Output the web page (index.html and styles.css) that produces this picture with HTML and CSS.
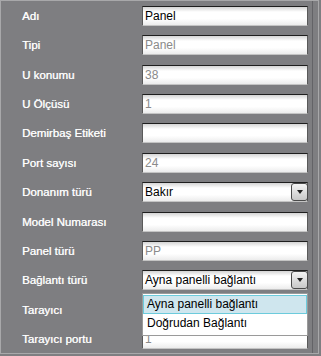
FILE: index.html
```html
<!DOCTYPE html>
<html lang="tr">
  <head>
    <meta charset="UTF-8">
    <title>Panel</title>
    <link rel="stylesheet" href="styles.css">
  </head>
  <body>
    <div class="panel">
      <div class="form">
        <label class="field-label">Adı</label>
        <div class="field">Panel</div>

        <label class="field-label">Tipi</label>
        <div class="field disabled">Panel</div>

        <label class="field-label">U konumu</label>
        <div class="field disabled">38</div>

        <label class="field-label">U Ölçüsü</label>
        <div class="field disabled">1</div>

        <label class="field-label">Demirbaş Etiketi</label>
        <div class="field"></div>

        <label class="field-label">Port sayısı</label>
        <div class="field disabled">24</div>

        <label class="field-label">Donanım türü</label>
        <div class="field select">
          <span class="select-value">Bakır</span>
          <span class="select-btn"><span class="arrow"></span></span>
        </div>

        <label class="field-label">Model Numarası</label>
        <div class="field"></div>

        <label class="field-label">Panel türü</label>
        <div class="field disabled">PP</div>

        <label class="field-label">Bağlantı türü</label>
        <div class="field select open">
          <span class="select-value">Ayna panelli bağlantı</span>
          <span class="select-btn"><span class="arrow"></span></span>
          <ul class="dropdown">
            <li class="active">Ayna panelli bağlantı</li>
            <li>Doğrudan Bağlantı</li>
          </ul>
        </div>

        <label class="field-label">Tarayıcı</label>
        <div class="field"></div>

        <label class="field-label">Tarayıcı portu</label>
        <div class="field disabled">1</div>
      </div>
    </div>
  </body>
</html>
```

FILE: styles.css
```css
:root {
  --panel-bg: #7e7e81;
  --label-color: #ffffff;
  --muted-text: #8a8a8a;
  --frame-light: #a8a8aa;
  --frame-dark: #636367;
}

* {
  margin: 0;
  padding: 0;
  box-sizing: border-box;
}

body {
  background-color: var(--panel-bg);
  font-family: 'Liberation Sans', Arial, sans-serif;
}

.panel {
  width: 319px;
  height: 354px;
  border: 1px solid var(--frame-light);
  padding-right: 5px;
  overflow: hidden;
}

.form {
  height: 100%;
  border-right: 1px solid var(--frame-dark);
  padding: 5px 0 0 21px;
  display: grid;
  grid-template-columns: 120px 166px;
  grid-auto-rows: 20px;
  row-gap: 9.36px;
  align-items: center;
}

.field-label {
  color: var(--label-color);
  font-size: 11.5px;
  line-height: 20px;
  white-space: nowrap;
  text-shadow: 0.4px 0 0 rgba(255, 255, 255, 0.75);
}

.field {
  height: 20px;
  font-size: 12px;
  line-height: 18px;
  padding-left: 2px;
  color: #000;
  border: 1px solid #5a5a5a;
  border-top-color: #1e1e1e;
  border-bottom-color: #c4c4c4;
  background: linear-gradient(to bottom, #d4d4d4 0, #ffffff 5px, #ffffff 65%, #ececec 100%);
}

.field.disabled {
  color: var(--muted-text);
}

.select {
  position: relative;
  display: flex;
  align-items: center;
}

.select-value {
  flex: 1;
}

.select-btn {
  width: 17px;
  height: 18px;
  margin-right: -1px;
  border: 1px solid #4a4a4a;
  border-radius: 3px;
  background: linear-gradient(to bottom, #f4f4f4, #c8c8c8);
  display: flex;
  align-items: center;
  justify-content: center;
}

.arrow {
  width: 0;
  height: 0;
  border-left: 3px solid transparent;
  border-right: 3px solid transparent;
  border-top: 4px solid #222;
}

.dropdown {
  position: absolute;
  top: 22px;
  left: -1px;
  right: -1px;
  list-style: none;
  background-color: #fff;
  border: 1px solid #9a9a9a;
  padding: 1px 0 2px;
  z-index: 2;
}

.dropdown li {
  height: 19px;
  line-height: 17px;
  padding-left: 3px;
  border: 1px solid transparent;
  color: #000;
}

.dropdown li.active {
  background-color: #cfe6ee;
  border-color: #6ccbdc;
}
```
